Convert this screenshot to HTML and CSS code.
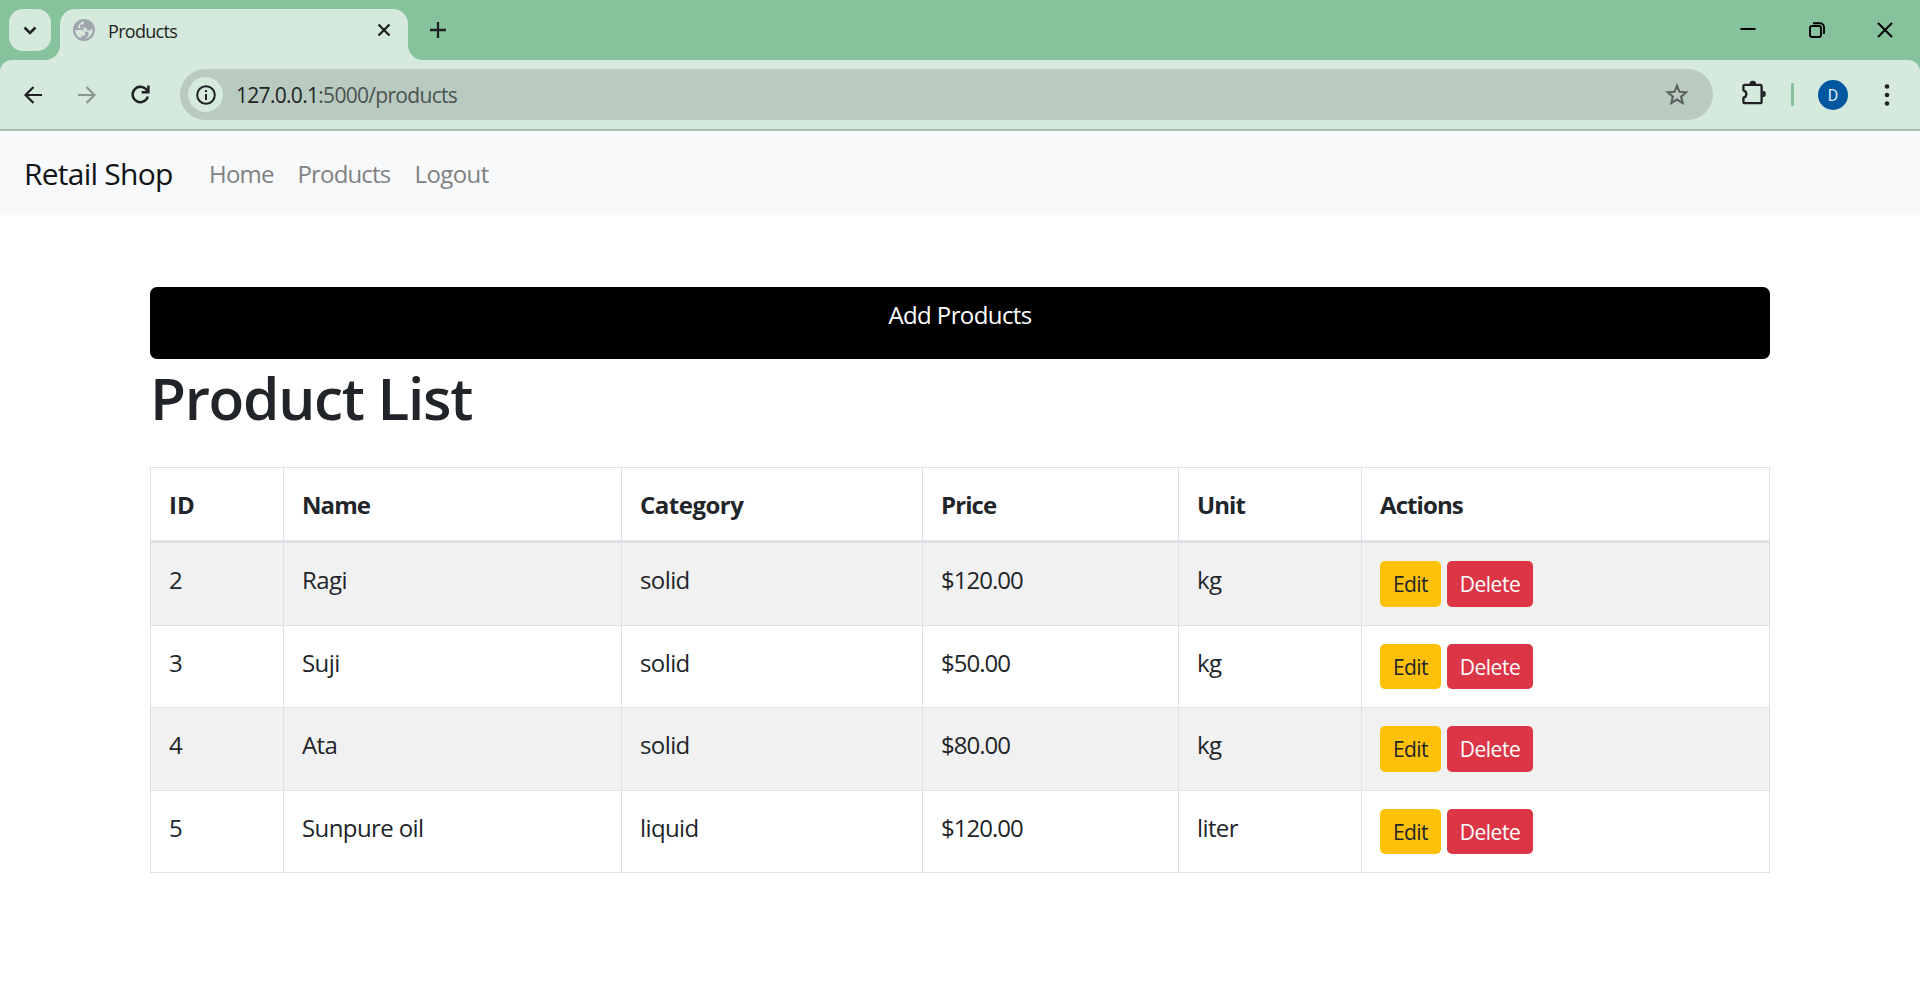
FILE: index.html
```html
<!DOCTYPE html>
<html lang="en">
<head>
<meta charset="utf-8">
<title>Products</title>
<link rel="stylesheet" href="styles.css">
</head>
<body>
<div class="tabstrip">
  <button class="tab-search" aria-label="Search tabs"><svg width="14" height="9" viewBox="0 0 14 9"><path d="M1.5 1.5L7 7l5.500-5.500" fill="none" stroke="#1f2124" stroke-width="2.600"/></svg></button>
  <div class="tab">
    <svg class="globe" width="22" height="22" viewBox="2 2 20 20"><path fill="#9fa5ac" d="M12 2C6.480 2 2 6.480 2 12s4.480 10 10 10 10-4.480 10-10S17.520 2 12 2zM4 12h4.400c3.407.022 4.922 1.730 4.543 5.127H9.488v2.470A8.004 8.004 0 0 1 4 12zm8.200-7.997c-.75 1-.7 2-.7 3h-3v3h6v2c1.400.8 2.400.9 3.600 0l1.700-1.100A8 8 0 0 1 12 20v-.2c4.600-1.500 4.900-4.300 3.500-6.300H11.500v-3H6.500c.4-3.600 2.700-5.900 5.700-6.497z"/></svg>
    <span class="tab-title">Products</span>
    <svg class="tab-close" width="14" height="14" viewBox="0 0 14 14"><path d="M1.500 1.500l11 11M12.500 1.500l-11 11" stroke="#1f2124" stroke-width="2.300"/></svg>
  </div>
  <svg class="new-tab" width="16" height="16" viewBox="0 0 16 16"><path d="M8 0v16M0 8h16" stroke="#1f2124" stroke-width="2.300"/></svg>
  <div class="window-controls">
    <svg width="16" height="16" viewBox="0 0 16 16"><path d="M.5 7h15" stroke="#000" stroke-width="2"/></svg>
    <svg width="16" height="16" viewBox="0 0 16 16" fill="none" stroke="#000" stroke-width="1.900"><rect x="1" y="4" width="11" height="11" rx="2"/><path d="M4 1.200h7a4 4 0 0 1 4 4V12"/></svg>
    <svg width="16" height="16" viewBox="0 0 16 16"><path d="M1 1l14 14M15 1L1 15" stroke="#000" stroke-width="2"/></svg>
  </div>
</div>
<div class="toolbar">
  <svg class="back" width="18" height="18" viewBox="0 0 18 18" fill="none" stroke="#1f2124" stroke-width="2.200"><path d="M18 9H1.600M9.500 1L1.500 9l8 8"/></svg>
  <svg class="forward" width="18" height="18" viewBox="0 0 18 18" fill="none" stroke="#8a968f" stroke-width="2.200"><path d="M0 9h16.400M8.500 1l8 8-8 8"/></svg>
  <svg class="reload" width="19" height="19" viewBox="0 0 19 19" fill="none" stroke="#1f2124" stroke-width="2.500"><path d="M16.800 11.500A7.700 7.700 0 1 1 15 4.200l2 2M17.400.5V7.200H10.700"/></svg>
  <div class="omnibox">
    <span class="site-info"><svg width="20" height="20" viewBox="0 0 20 20"><circle cx="10" cy="10" r="8.800" fill="none" stroke="#1f2124" stroke-width="2"/><path d="M10 9v6M10 5v2" stroke="#1f2124" stroke-width="2"/></svg></span>
    <span class="url"><span class="host">127.0.0.1</span>:5000/products</span>
    <svg class="star" width="24" height="23" viewBox="0 0 24 23"><path d="M12 2.800l2.500 6 6.600.5-5 4.300 1.600 6.500-5.700-3.500-5.700 3.500 1.600-6.500-5-4.300 6.600-.5z" fill="none" stroke="#5a615e" stroke-width="2.100"/></svg>
  </div>
  <svg class="extensions" width="25" height="25" viewBox="0 0 25 25"><path d="M1.400 6.200q0-1.400 1.400-1.400H18.200q1.400 0 1.400 1.400V21.800q0 1.400-1.400 1.400H2.800q-1.400 0-1.400-1.400V17.700a3.800 3.800 0 0 0 0-7.400z" fill="none" stroke="#1f2124" stroke-width="2.300" stroke-linejoin="round"/><path d="M7.500 4a3.300 3.300 0 0 1 6.600 0zM20.500 10.700a3.300 3.300 0 0 1 0 6.600z" fill="#1f2124"/></svg>
  <span class="divider"></span>
  <span class="avatar">D</span>
  <svg class="menu" width="6" height="22" viewBox="0 0 6 22" fill="#1f2124"><circle cx="3" cy="2.500" r="2.300"/><circle cx="3" cy="11" r="2.300"/><circle cx="3" cy="19.500" r="2.300"/></svg>
</div>
<nav class="navbar">
  <a class="brand">Retail Shop</a>
  <a class="nav-link home">Home</a>
  <a class="nav-link products">Products</a>
  <a class="nav-link">Logout</a>
</nav>
<main class="container">
  <a class="add-button">Add Products</a>
  <h1>Product List</h1>
  <table class="products-table">
    <colgroup><col class="c-id"><col class="c-name"><col class="c-category"><col class="c-price"><col class="c-unit"><col></colgroup>
    <thead><tr><th class="wide">ID</th><th>Name</th><th class="category">Category</th><th>Price</th><th>Unit</th><th>Actions</th></tr></thead>
    <tbody>
      <tr><td>2</td><td>Ragi</td><td>solid</td><td class="price">$120.00</td><td>kg</td><td><div class="actions"><a class="btn edit">Edit</a><a class="btn delete">Delete</a></div></td></tr>
      <tr><td>3</td><td>Suji</td><td>solid</td><td class="price">$50.00</td><td>kg</td><td><div class="actions"><a class="btn edit">Edit</a><a class="btn delete">Delete</a></div></td></tr>
      <tr><td>4</td><td>Ata</td><td>solid</td><td class="price">$80.00</td><td>kg</td><td><div class="actions"><a class="btn edit">Edit</a><a class="btn delete">Delete</a></div></td></tr>
      <tr><td>5</td><td>Sunpure oil</td><td>liquid</td><td class="price">$120.00</td><td>liter</td><td><div class="actions"><a class="btn edit">Edit</a><a class="btn delete">Delete</a></div></td></tr>
    </tbody>
  </table>
</main>
</body>
</html>
```
FILE: styles.css
```css
* { box-sizing: border-box; }
body {
  margin: 0;
  min-height: 1008px;
  background: #fff;
  color: #212529;
  font: 24px/36px "Open Sans", "Noto Sans", sans-serif;
  letter-spacing: -0.6px;
}
svg { display: block; flex: none; }

/* Browser tab strip */
.tabstrip {
  height: 60px;
  display: flex;
  align-items: flex-start;
  background: #86c29c;
}
.tab-search {
  width: 42px;
  height: 42px;
  margin: 9px 9px 0;
  padding: 0;
  border: 0;
  border-radius: 14px;
  background: #d5e9dc;
  display: grid;
  place-items: center;
}
.tab {
  position: relative;
  width: 348px;
  height: 51px;
  margin-top: 9px;
  padding: 0 17px 9px 13px;
  display: flex;
  align-items: center;
  background: #d5e9dc;
  border-radius: 15px 15px 0 0;
}
.tab::before, .tab::after {
  content: "";
  position: absolute;
  bottom: 0;
  width: 15px;
  height: 15px;
}
.tab::before { left: -15px; background: radial-gradient(circle at 0 0, transparent 14.5px, #d5e9dc 15.5px); }
.tab::after { right: -15px; background: radial-gradient(circle at 100% 0, transparent 14.5px, #d5e9dc 15.5px); }
.tab-title {
  flex: 1;
  margin-left: 13px;
  padding-top: 2px;
  font-size: 18px;
  letter-spacing: -0.7px;
  color: #1f2421;
}
.new-tab { margin: 22px 0 0 22px; }
.window-controls { margin: 22px 27px 0 auto; display: flex; gap: 52.500px; }

/* Address toolbar */
.toolbar {
  height: 71px;
  display: flex;
  align-items: center;
  border-bottom: 2px solid #a9bbb0;
  background:
    radial-gradient(circle at 12px 12px, #d5e9dc 11.5px, #86c29c 12.5px) 0 0 / 12px 12px no-repeat,
    radial-gradient(circle at 0 12px, #d5e9dc 11.5px, #86c29c 12.5px) 100% 0 / 12px 12px no-repeat,
    #d5e9dc;
}
.back { margin-left: 24px; }
.forward { margin-left: 36px; }
.reload { margin-left: 35px; }
.omnibox {
  width: 1533px;
  height: 51px;
  margin-left: 30px;
  padding: 0 24px 0 8px;
  display: flex;
  align-items: center;
  border-radius: 26px;
  background: #b9cac0;
}
.site-info {
  width: 35px;
  height: 35px;
  display: grid;
  place-items: center;
  border-radius: 50%;
  background: #d5e9dc;
}
.url { flex: 1; margin-left: 13px; font-size: 21px; letter-spacing: -0.7px; color: #4c5350; }
.host { color: #1f2421; }
.extensions { margin: -4px 0 0 29px; }
.divider { width: 3px; height: 23px; margin-left: 24px; border-radius: 1px; background: #86c29c; }
.avatar {
  width: 30px;
  height: 30px;
  margin-left: 24px;
  border-radius: 50%;
  background: #0057a0;
  color: #dfeaf5;
  font: 400 16px/31px Roboto, sans-serif;
  letter-spacing: 0;
  text-align: center;
}
.menu { margin-left: 36px; }

/* Site navigation */
.navbar {
  height: 84px;
  padding-left: 24px;
  display: flex;
  align-items: center;
  background: #f8f9fb;
}
.brand { width: 185px; padding-top: 2px; font-size: 30px; letter-spacing: -0.76px; color: #111315; }
.nav-link { padding-top: 2px; color: #808182; }
.home { width: 88.500px; letter-spacing: -0.8px; }
.products { width: 117px; letter-spacing: -0.85px; }

/* Page content */
.container { width: 1620px; margin: 72px auto 0; }
.add-button {
  display: block;
  height: 72px;
  padding-top: 10px;
  border-radius: 7px;
  background: #000;
  color: #fff;
  text-align: center;
}
h1 {
  height: 72px;
  margin: 2px 0 34px;
  font-size: 58.500px;
  line-height: 72px;
  font-weight: 600;
  letter-spacing: -1.3px;
}
.products-table {
  width: 1620px;
  table-layout: fixed;
  border-spacing: 0;
  border-top: 1px solid #dee2e6;
  border-left: 1px solid #dee2e6;
}
.c-id { width: 133px; }
.c-name { width: 338px; }
.c-category { width: 301px; }
.c-price { width: 256px; }
.c-unit { width: 183px; }
th, td {
  padding: 18px 18px 0;
  border-right: 1px solid #dee2e6;
  border-bottom: 1px solid #dee2e6;
  line-height: 38px;
  text-align: left;
  vertical-align: top;
}
th { height: 75px; border-bottom-width: 3px; font-weight: 700; letter-spacing: -0.9px; }
th.category { letter-spacing: -0.5px; }
th.wide { letter-spacing: 0; }
td { height: 82px; }
.price { letter-spacing: -1px; }
tbody tr:nth-child(odd) td { height: 83px; background: #f1f1f1; }
tbody tr:nth-child(even) td { background: #fff; }
.actions { display: flex; gap: 6px; }
.btn {
  height: 46px;
  padding-top: 1px;
  border-radius: 5px;
  font-size: 21px;
  line-height: 44px;
  letter-spacing: -0.45px;
  text-align: center;
}
tbody tr:nth-child(even) .btn { height: 45px; }
.edit { width: 61px; background: #ffc107; letter-spacing: -0.6px; }
.delete { width: 86px; background: #dc3545; color: #fff; }
```
